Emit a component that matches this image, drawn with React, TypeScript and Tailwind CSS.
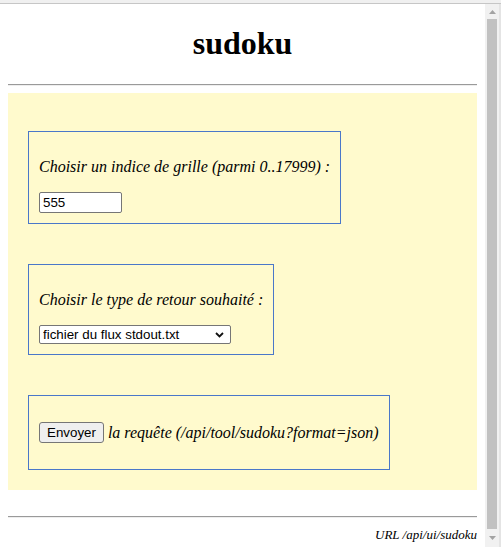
import React, { useState } from 'react';

const serif = { fontFamily: '"Liberation Serif", "Times New Roman", serif' };

function Box({ children }: { children: React.ReactNode }) {
  return (
    <div className="w-fit border border-[#4a77c9] px-[10px] py-[10px]">{children}</div>
  );
}

function Chevron() {
  return (
    <svg width="9" height="6" viewBox="0 0 9 6" className="shrink-0">
      <path d="M1 1 L4.5 4.5 L8 1" fill="none" stroke="#111" strokeWidth="1.8" />
    </svg>
  );
}

function Triangle({ down }: { down?: boolean }) {
  return (
    <svg width="7" height="4" viewBox="0 0 7 4">
      <polygon points={down ? '0,0 7,0 3.5,4' : '0,4 7,4 3.5,0'} fill="#a3a3a3" />
    </svg>
  );
}

export default function App() {
  const [indice, setIndice] = useState('555');
  const [format, setFormat] = useState('stdout');

  return (
    <div className="h-[547px] w-[501px] overflow-hidden bg-white flex flex-col">
      {/* window edge */}
      <div className="h-[3px] bg-[#f0f0f0] shrink-0"></div>
      <div className="h-px bg-[#c6c6c6] shrink-0"></div>

      <div className="flex flex-1 min-h-0">
        {/* page */}
        <div className="w-[485px] shrink-0 px-2 text-black" style={serif}>
          <h1 className="mt-[21px] text-center text-[32px] leading-[36px] font-bold">sudoku</h1>
          <div className="mt-[23px] border-t border-b border-t-[#9a9a9a] border-b-[#eeeeee]"></div>

          <div className="mt-[7px] bg-[#fffacd] px-5 pt-[38px] pb-5 flex flex-col gap-10">
            <Box>
              <p className="my-4 italic text-[16px] leading-[18px]">
                Choisir un indice de grille (parmi 0..17999) :
              </p>
              <input
                type="text"
                value={indice}
                onChange={(e) => setIndice(e.target.value)}
                className="block w-[83px] h-[21px] border border-[#767676] rounded-[2px] bg-white px-[3px] text-[13.33px] text-black outline-none"
                style={{ fontFamily: '"Liberation Sans", Arial, sans-serif' }}
              />
            </Box>

            <Box>
              <p className="my-4 italic text-[16px] leading-[18px]">
                Choisir le type de retour souhaité :
              </p>
              <div
                className="flex items-center w-[192px] h-[19px] border border-[#767676] rounded-[2px] bg-white pr-[6px]"
                style={{ fontFamily: '"Liberation Sans", Arial, sans-serif' }}
              >
                <select
                  value={format}
                  onChange={(e) => setFormat(e.target.value)}
                  className="appearance-none flex-1 min-w-0 h-full bg-transparent pl-[3px] text-[13.33px] leading-[17px] text-black outline-none"
                >
                  <option value="stdout">fichier du flux stdout.txt</option>
                  <option value="json">json</option>
                  <option value="html">html</option>
                </select>
                <Chevron />
              </div>
            </Box>

            <Box>
              <p className="my-4 h-[21px] flex items-center italic text-[16px] leading-[18px] whitespace-nowrap">
                <button
                  type="button"
                  className="h-[21px] px-[7px] border border-[#767676] rounded-[3px] bg-[#efefef] text-[13.33px] text-black not-italic"
                  style={{ fontFamily: '"Liberation Sans", Arial, sans-serif' }}
                >
                  Envoyer
                </button>
                <span className="ml-[4px]">la requête (/api/tool/sudoku?format=json)</span>
              </p>
            </Box>
          </div>

          <div className="mt-[26px] border-t border-b border-t-[#9a9a9a] border-b-[#eeeeee]"></div>
          <p className="mt-[9px] text-right italic text-[13px] leading-[15px]">URL /api/ui/sudoku</p>
        </div>

        {/* scrollbar */}
        <div className="w-[14px] shrink-0 bg-[#f1f1f1] flex flex-col">
          <div className="h-[15px] flex items-center justify-center">
            <Triangle />
          </div>
          <div className="h-[510px] mx-[2px] bg-[#c1c1c1]"></div>
          <div className="flex-1 flex justify-center pt-[7px]">
            <Triangle down />
          </div>
        </div>
        <div className="w-[2px] shrink-0 bg-[#e4e4e4]"></div>
      </div>
    </div>
  );
}
